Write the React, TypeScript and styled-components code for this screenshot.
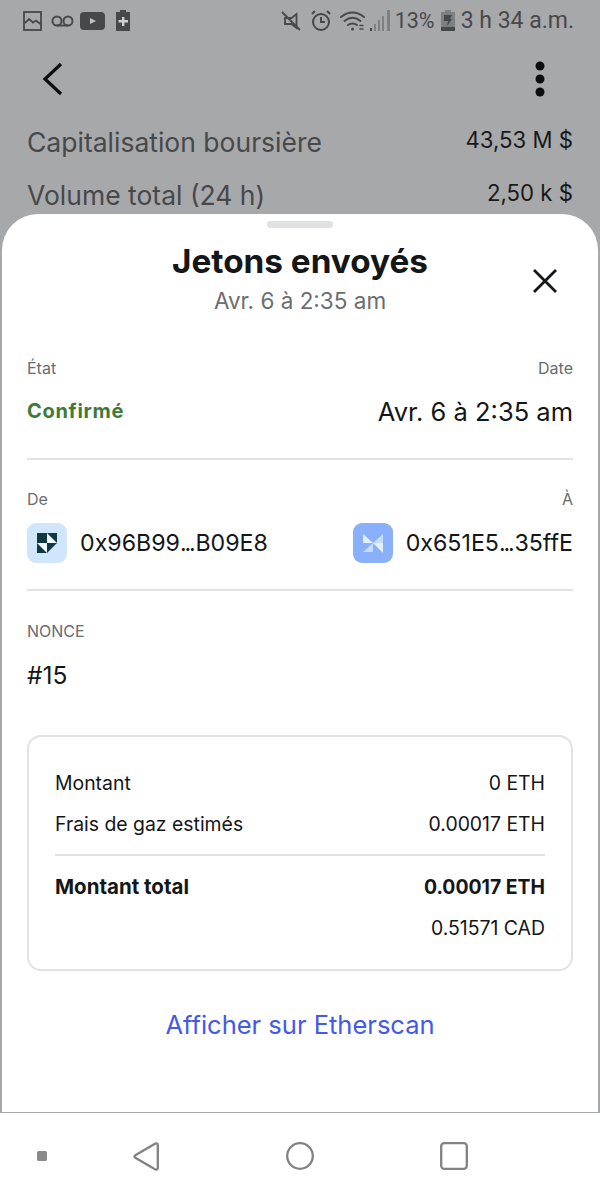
import React from "react";
import styled, { createGlobalStyle } from "styled-components";

const Global = createGlobalStyle`
  html, body { margin: 0; padding: 0; background: #fff; }
  * { box-sizing: border-box; }
  body { font-family: Inter, "Liberation Sans", sans-serif; }
`;

const Page = styled.div`
  width: 600px;
  height: 1200px;
  display: flex;
  flex-direction: column;
  overflow: hidden;
  background: #fff;
`;

const Screen = styled.div`
  position: relative;
  height: 1113px;
  background: #a7a8aa;
  display: flex;
  flex-direction: column;
`;

const StatusBar = styled.div`
  height: 40px;
  display: flex;
  align-items: center;
  justify-content: space-between;
  padding: 1px 26px 0 23px;
  color: #47484a;
`;

const StatusGroup = styled.div`
  display: flex;
  align-items: center;
`;

const StatusIcon = styled.span<{ $ml?: number }>`
  display: flex;
  margin-left: ${(p) => p.$ml ?? 0}px;
`;

const StatusText = styled.span<{ $size: number; $ml: number }>`
  font-family: Roboto, sans-serif;
  font-size: ${(p) => p.$size}px;
  margin-left: ${(p) => p.$ml}px;
  color: #47484a;
  white-space: nowrap;
`;

const TopBar = styled.div`
  height: 72px;
  margin-top: 3px;
  display: flex;
  align-items: center;
  justify-content: space-between;
  padding: 0 54px 0 42px;
`;

const Stat = styled.div`
  display: flex;
  justify-content: space-between;
  align-items: center;
  padding: 0 27px;
  height: 53px;
`;

const StatLabel = styled.span`
  font-size: 26.5px;
  color: #47484a;
`;

const StatValue = styled.span`
  font-size: 22.2px;
  padding-bottom: 4px;
  color: #18191b;
`;

const Sheet = styled.div`
  position: absolute;
  left: 2px;
  right: 2px;
  top: 214px;
  bottom: 1px;
  background: #fff;
  border-radius: 36px 36px 0 0;
  padding: 0 25px;
  display: flex;
  flex-direction: column;
`;

const Handle = styled.div`
  width: 66px;
  height: 7px;
  border-radius: 4px;
  background: #e0e1e2;
  align-self: center;
  margin-top: 7px;
`;

const TitleBlock = styled.div`
  position: relative;
  text-align: center;
  margin-top: 14px;
  height: 116px;
`;

const Title = styled.div`
  font-size: 33.3px;
  font-weight: 700;
  line-height: 39px;
  color: #141618;
`;

const Subtitle = styled.div`
  font-size: 22.5px;
  line-height: 30px;
  margin-top: 5px;
  color: #6a6d72;
`;

const CloseButton = styled.div`
  position: absolute;
  right: 15px;
  top: 26px;
  width: 26px;
  height: 26px;
  display: flex;
`;

const StateSection = styled.div`
  border-bottom: 2px solid #e2e3e4;
`;

const PartiesSection = styled.div`
  padding-top: 29px;
  border-bottom: 2px solid #e2e3e4;
`;

const NonceSection = styled.div`
  padding-top: 30px;
`;

const LabelRow = styled.div`
  display: flex;
  justify-content: space-between;
  font-size: 16px;
  line-height: 20px;
  color: #686b6f;
`;

const StateRow = styled.div`
  display: flex;
  justify-content: space-between;
  align-items: center;
  height: 44px;
  margin: 11px 0 25px;
`;

const PartiesRow = styled.div`
  display: flex;
  justify-content: space-between;
  align-items: center;
  margin: 14px 0 26px;
`;

const Confirmed = styled.span`
  font-size: 20px;
  font-weight: 700;
  letter-spacing: 0.7px;
  color: #3f7a38;
`;

const DateValue = styled.span`
  font-size: 25.5px;
  color: #141618;
`;

const Address = styled.div`
  display: flex;
  align-items: center;
  gap: 13px;
  font-size: 23.2px;
  color: #141618;
`;

const Dots = styled.span`
  letter-spacing: -2.2px;
  margin-right: 2px;
`;

const Nonce = styled.div`
  font-size: 24.5px;
  line-height: 30px;
  margin-top: 19px;
  color: #141618;
`;

const Card = styled.div`
  margin-top: 45px;
  height: 236px;
  border: 2px solid #e2e3e4;
  border-radius: 14px;
  padding: 25px 26px 0;
  display: flex;
  flex-direction: column;
`;

const CardRow = styled.div<{ $bold?: boolean }>`
  display: flex;
  justify-content: space-between;
  align-items: center;
  height: 41px;
  font-size: 19.4px;
  color: #141618;
  font-weight: ${(p) => (p.$bold ? 700 : 400)};
`;

const TotalLabel = styled.span`
  font-size: 20.5px;
`;

const CardRule = styled.div`
  height: 2px;
  background: #e2e3e4;
  margin: 10px 0 10px;
`;

const CardLink = styled.div`
  margin-top: 39px;
  text-align: center;
  font-size: 25.5px;
  line-height: 30px;
  color: #4459ea;
`;

const NavBar = styled.div`
  flex: 1;
  display: grid;
  grid-template-columns: 84px 124px 184px 124px;
  align-items: center;
  justify-items: center;
  padding-bottom: 1px;
`;

const NavItem = styled.div`
  display: flex;
`;

const Picture = () => (
  <svg width="19" height="20" viewBox="0 0 19 20" fill="none" stroke="#47484a" strokeWidth="1.800">
    <rect x="1" y="1" width="17" height="18" />
    <path d="M2 12l4-4 4 3.500 3-2 5 4" />
  </svg>
);
const Voicemail = () => (
  <svg width="23" height="14" viewBox="0 0 23 14" fill="none" stroke="#47484a" strokeWidth="2">
    <circle cx="6" cy="7" r="4.500" />
    <circle cx="17" cy="7" r="4.500" />
    <path d="M6 11.500h11" />
  </svg>
);
const Youtube = () => (
  <svg width="25" height="18" viewBox="0 0 25 18">
    <rect width="25" height="18" rx="4" fill="#47484a" />
    <path d="M10 6l6 3-6 3z" fill="#c0c1c2" />
  </svg>
);
const BatteryPlus = () => (
  <svg width="14" height="21" viewBox="0 0 14 21">
    <path d="M4 0h6v2h4v19H0V2h4z" fill="#47484a" />
    <path d="M6 7h2.400v3H12v2.400H8.400V16H6v-3.600H2.500V10H6z" fill="#d0d1d2" />
  </svg>
);
const Mute = () => (
  <svg width="20" height="20" viewBox="0 0 20 20" fill="none" stroke="#47484a" strokeWidth="1.800">
    <path d="M15.500 3v14l-5-4H4V7h6.500z" />
    <path d="M1 1l18 18" />
  </svg>
);
const Alarm = () => (
  <svg width="20" height="21" viewBox="0 0 20 21" fill="none" stroke="#47484a" strokeWidth="2">
    <circle cx="10" cy="12" r="8" />
    <path d="M10 7v5h4M1 4l3-3M19 4l-3-3" />
  </svg>
);
const Wifi = () => (
  <svg width="25" height="21" viewBox="0 0 25 21" fill="none" stroke="#47484a" strokeWidth="2" strokeLinecap="round">
    <path d="M1 7c7-6 16-6 23 0M4.500 11c5-4 11-4 16 0M8 15c3-2 6-2 9 0" />
    <circle cx="12.500" cy="19" r="1.500" fill="#47484a" stroke="none" />
    <path d="M20 15.500h3M20 19h3" strokeWidth="1.500" />
  </svg>
);
const Signal = () => (
  <svg width="21" height="21" viewBox="0 0 21 21" fill="#7f8082">
    <rect x="0" y="18" width="2" height="3" fill="#47484a" />
    <rect x="4" y="14" width="2" height="7" />
    <rect x="8" y="10" width="2" height="11" />
    <rect x="12" y="6" width="2" height="15" />
    <rect x="17" y="0" width="3" height="21" />
  </svg>
);
const Battery = () => (
  <svg width="14" height="21" viewBox="0 0 14 21">
    <path d="M4 0h6v2h4v19H0V2h4z" fill="#7e7f81" />
    <rect y="17" width="14" height="4" fill="#47484a" />
    <path d="M3 5h8l-2 4h2l-5 7 1-5H3z" fill="#47484a" />
  </svg>
);
const Back = () => (
  <svg width="22" height="34" viewBox="0 0 22 34" fill="none" stroke="#0d0e10" strokeWidth="3.200">
    <path d="M19 2L3 17l16 15" />
  </svg>
);
const More = () => (
  <svg width="12" height="36" viewBox="0 0 12 36" fill="#0d0e10">
    <circle cx="6" cy="5" r="4.500" />
    <circle cx="6" cy="18" r="4.500" />
    <circle cx="6" cy="31" r="4.500" />
  </svg>
);
const Close = () => (
  <svg width="26" height="26" viewBox="0 0 26 26" fill="none" stroke="#141618" strokeWidth="2.800">
    <path d="M2 2l22 22M24 2L2 24" />
  </svg>
);
const FromAvatar = () => (
  <svg width="40" height="40" viewBox="0 0 40 40">
    <rect width="40" height="40" rx="9" fill="#cfe6fc" />
    <path d="M10 10h20v10H20v10H10z" fill="#0f3a40" />
    <path d="M20 20h10L20 30z" fill="#0f3a40" />
    <path d="M20 10l10 10H20zM10 20h10v10z" fill="#f2f8fe" />
  </svg>
);
const ToAvatar = () => (
  <svg width="40" height="40" viewBox="0 0 40 40">
    <rect width="40" height="40" rx="9" fill="#8ab0fb" />
    <path d="M10 11l10 9H10z" fill="#e3effd" />
    <path d="M10 29l10-9v9z" fill="#c4def9" />
    <path d="M30 11v9H20z" fill="#c4def9" />
    <path d="M20 20h10v10z" fill="#e3effd" />
  </svg>
);
const SquareDot = () => (
  <svg width="10" height="10" viewBox="0 0 10 10">
    <rect width="10" height="10" rx="1.500" fill="#8a8a8a" />
  </svg>
);
const NavBack = () => (
  <svg width="26" height="29" viewBox="0 0 26 29" fill="none" stroke="#828282" strokeWidth="2.300" strokeLinejoin="round">
    <path d="M22 1.700c1.500-.800 2.800 0 2.800 1.500v22.600c0 1.500-1.300 2.300-2.800 1.500L2.300 15.800c-1.200-.700-1.200-1.900 0-2.600z" />
  </svg>
);
const NavHome = () => (
  <svg width="28" height="28" viewBox="0 0 28 28" fill="none" stroke="#828282" strokeWidth="2.300">
    <circle cx="14" cy="14" r="12.800" />
  </svg>
);
const NavRecent = () => (
  <svg width="28" height="28" viewBox="0 0 28 28" fill="none" stroke="#828282" strokeWidth="2.300">
    <rect x="1.200" y="1.200" width="25.600" height="25.600" rx="3" />
  </svg>
);

export default function App() {
  return (
    <Page>
      <Global />
      <Screen>
        <StatusBar>
          <StatusGroup>
            <Picture />
            <StatusIcon $ml={9}><Voicemail /></StatusIcon>
            <StatusIcon $ml={6}><Youtube /></StatusIcon>
            <StatusIcon $ml={11}><BatteryPlus /></StatusIcon>
          </StatusGroup>
          <StatusGroup>
            <Mute />
            <StatusIcon $ml={10}><Alarm /></StatusIcon>
            <StatusIcon $ml={9}><Wifi /></StatusIcon>
            <StatusIcon $ml={5}><Signal /></StatusIcon>
            <StatusText $size={21.5} $ml={4}>13%</StatusText>
            <StatusIcon $ml={6}><Battery /></StatusIcon>
            <StatusText $size={23} $ml={6}>3 h 34 a.m.</StatusText>
          </StatusGroup>
        </StatusBar>
        <TopBar>
          <Back />
          <More />
        </TopBar>
        <Stat>
          <StatLabel>Capitalisation boursière</StatLabel>
          <StatValue>43,53 M $</StatValue>
        </Stat>
        <Stat>
          <StatLabel>Volume total (24 h)</StatLabel>
          <StatValue>2,50 k $</StatValue>
        </Stat>
        <Sheet>
          <Handle />
          <TitleBlock>
            <Title>Jetons envoyés</Title>
            <Subtitle>Avr. 6 à 2:35 am</Subtitle>
            <CloseButton>
              <Close />
            </CloseButton>
          </TitleBlock>
          <StateSection>
            <LabelRow>
              <span>État</span>
              <span>Date</span>
            </LabelRow>
            <StateRow>
              <Confirmed>Confirmé</Confirmed>
              <DateValue>Avr. 6 à 2:35 am</DateValue>
            </StateRow>
          </StateSection>
          <PartiesSection>
            <LabelRow>
              <span>De</span>
              <span>À</span>
            </LabelRow>
            <PartiesRow>
              <Address>
                <FromAvatar />
                <span>0x96B99<Dots>...</Dots>B09E8</span>
              </Address>
              <Address>
                <ToAvatar />
                <span>0x651E5<Dots>...</Dots>35ffE</span>
              </Address>
            </PartiesRow>
          </PartiesSection>
          <NonceSection>
            <LabelRow>NONCE</LabelRow>
            <Nonce>#15</Nonce>
          </NonceSection>
          <Card>
            <CardRow>
              <span>Montant</span>
              <span>0 ETH</span>
            </CardRow>
            <CardRow>
              <span>Frais de gaz estimés</span>
              <span>0.00017 ETH</span>
            </CardRow>
            <CardRule />
            <CardRow $bold>
              <TotalLabel>Montant total</TotalLabel>
              <span>0.00017 ETH</span>
            </CardRow>
            <CardRow>
              <span />
              <span>0.51571 CAD</span>
            </CardRow>
          </Card>
          <CardLink>Afficher sur Etherscan</CardLink>
        </Sheet>
      </Screen>
      <NavBar>
        <NavItem><SquareDot /></NavItem>
        <NavItem><NavBack /></NavItem>
        <NavItem><NavHome /></NavItem>
        <NavItem><NavRecent /></NavItem>
      </NavBar>
    </Page>
  );
}
